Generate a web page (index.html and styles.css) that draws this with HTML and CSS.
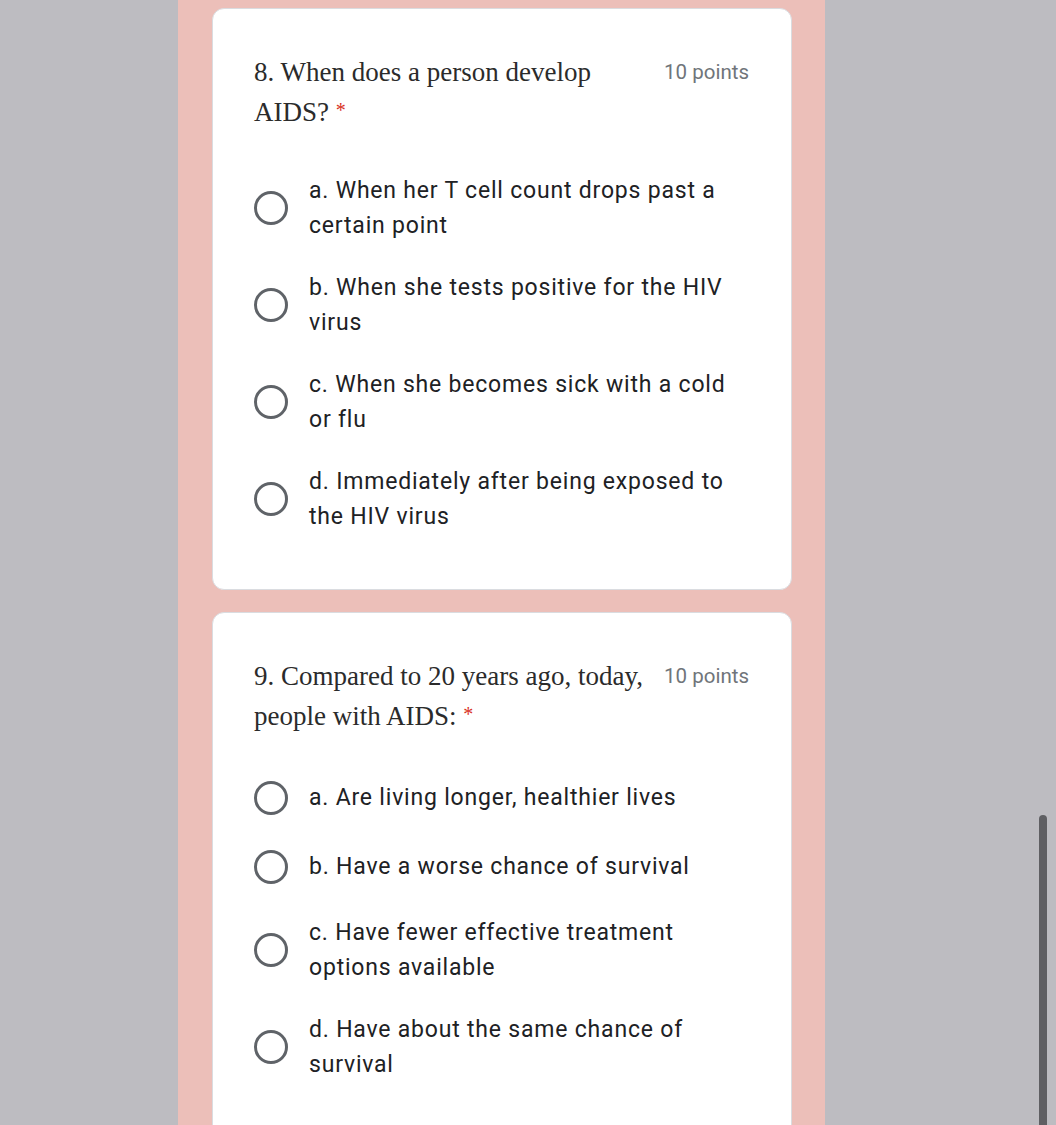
FILE: index.html
```html
<!DOCTYPE html>
<html>
<head>
<meta charset="utf-8">
<link rel="stylesheet" href="styles.css">
</head>
<body>
<div class="column">
  <div class="card">
    <div class="head">
      <div class="title">8. When does a person develop AIDS?&nbsp;<span class="req">*</span></div>
      <div class="points">10 points</div>
    </div>
    <div class="options">
      <div class="opt"><span class="radio"></span><span class="label">a. When her T cell count drops past a certain point</span></div>
      <div class="opt"><span class="radio"></span><span class="label">b. When she tests positive for the HIV virus</span></div>
      <div class="opt"><span class="radio"></span><span class="label">c. When she becomes sick with a cold or flu</span></div>
      <div class="opt"><span class="radio"></span><span class="label">d. Immediately after being exposed to the HIV virus</span></div>
    </div>
  </div>
  <div class="card">
    <div class="head">
      <div class="title">9. Compared to 20 years ago, today, people with AIDS:&nbsp;<span class="req">*</span></div>
      <div class="points">10 points</div>
    </div>
    <div class="options">
      <div class="opt"><span class="radio"></span><span class="label">a. Are living longer, healthier lives</span></div>
      <div class="opt"><span class="radio"></span><span class="label">b. Have a worse chance of survival</span></div>
      <div class="opt"><span class="radio"></span><span class="label">c. Have fewer effective treatment options available</span></div>
      <div class="opt"><span class="radio"></span><span class="label">d. Have about the same chance of survival</span></div>
    </div>
  </div>
</div>
<div class="scrollbar"></div>
</body>
</html>
```

FILE: styles.css
```css
html, body {
  margin: 0;
  padding: 0;
  height: 100%;
  overflow: hidden;
}
body {
  background: #bdbcc1;
}
.column {
  margin-left: 178px;
  width: 647px;
  min-height: 100%;
  background: #ecbfb9;
  padding: 8px 33px 0 34px;
  box-sizing: border-box;
  display: flex;
  flex-direction: column;
  gap: 22px;
}
.card {
  background: #fff;
  border: 1px solid #dadce0;
  border-radius: 12px;
  padding: 43px 42px 42px 41px;
}
.head {
  display: flex;
  justify-content: space-between;
  align-items: flex-start;
  gap: 16px;
}
.title {
  font-family: "Liberation Serif", "DejaVu Serif", serif;
  font-size: 27px;
  line-height: 40px;
  color: #2b2b2b;
  width: 395px;
}
.req {
  color: #d93025;
  font-size: 20px;
  line-height: 20px;
  vertical-align: 4px;
}
.points {
  font-family: Roboto, "Liberation Sans", sans-serif;
  font-size: 20.5px;
  line-height: 40px;
  color: #70757a;
  white-space: nowrap;
}
.options {
  margin-top: 27px;
}
.opt {
  display: flex;
  align-items: center;
  padding: 13.5px 0;
  min-height: 42px;
}
.radio {
  flex: none;
  width: 28px;
  height: 28px;
  border: 3px solid #5f6368;
  border-radius: 50%;
  margin-right: 21px;
}
.label {
  font-family: Roboto, "Liberation Sans", sans-serif;
  font-size: 23px;
  letter-spacing: 0.8px;
  line-height: 35px;
  color: #202124;
}
.scrollbar {
  position: fixed;
  right: 9px;
  top: 815px;
  width: 8px;
  bottom: 0;
  background: #5f5f63;
  border-radius: 4px 4px 0 0;
}
```
